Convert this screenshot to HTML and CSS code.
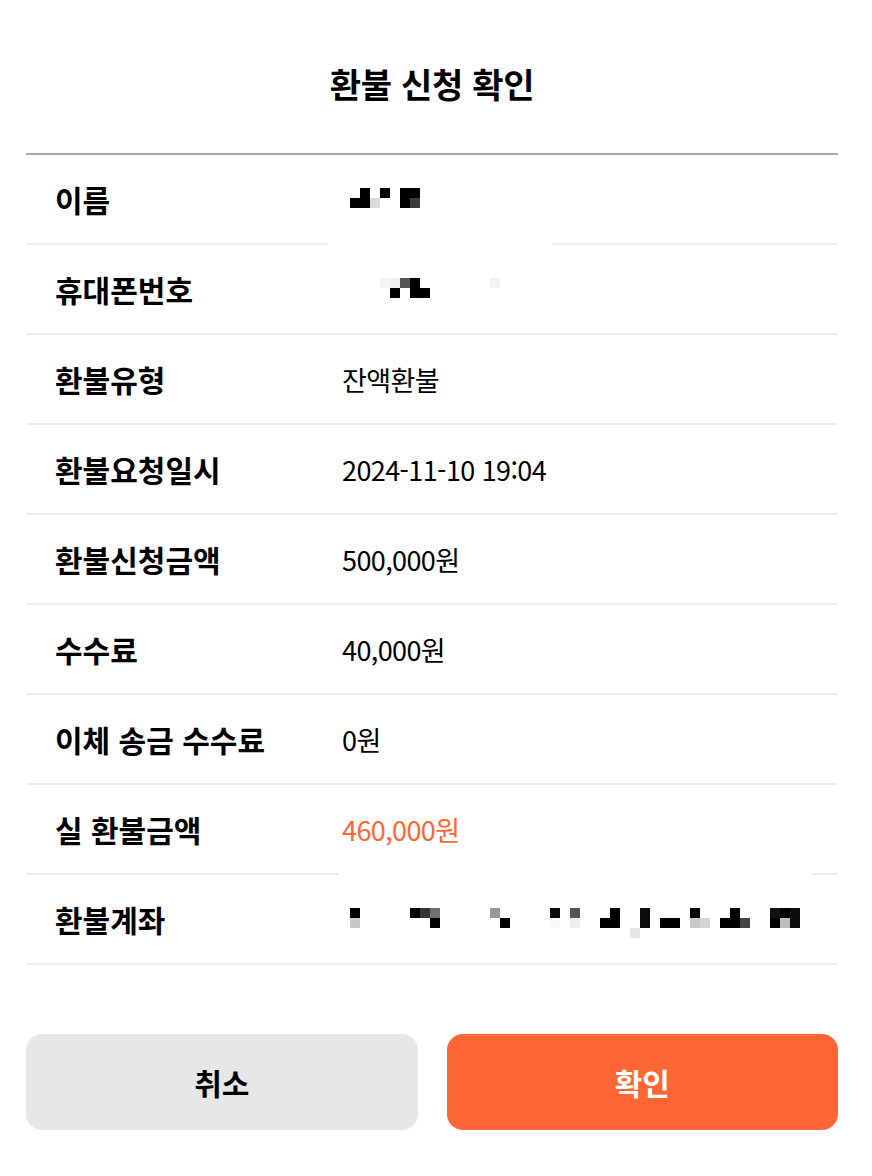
FILE: index.html
```html
<!DOCTYPE html>
<html lang="ko">
<head>
    <meta charset="UTF-8">
    <meta name="viewport" content="width=device-width, initial-scale=1.0">
    <title>환불 신청 확인</title>
    <link rel="stylesheet" href="styles.css">
</head>
<body>
    <div class="refund-confirm">
        <h1 class="title">환불 신청 확인</h1>

        <div class="info-list">
            <div class="info-row">
                <span class="label">이름</span>
                <span class="value"></span>
                <svg class="redact redact-name" width="225" height="90" viewBox="0 0 225 90" shape-rendering="crispEdges">
                    <rect width="225" height="90" fill="#fff"/>
                    <rect x="32" y="33" width="10" height="10" fill="#000"/>
                    <rect x="22" y="43" width="20" height="10" fill="#000"/>
                    <rect x="42" y="43" width="10" height="10" fill="#d9d9d9"/>
                    <rect x="52" y="33" width="10" height="10" fill="#000"/>
                    <rect x="72" y="33" width="20" height="10" fill="#000"/>
                    <rect x="72" y="43" width="10" height="10" fill="#000"/>
                    <rect x="82" y="43" width="10" height="10" fill="#3a3a3a"/>
                </svg>
            </div>
            <div class="info-row">
                <span class="label">휴대폰번호</span>
                <span class="value"></span>
                <svg class="redact redact-phone" width="120" height="90" viewBox="0 0 120 90" shape-rendering="crispEdges">
                    <rect x="0" y="33" width="10" height="10" fill="#f5f5f5"/>
                    <rect x="10" y="33" width="10" height="10" fill="#efefef"/>
                    <rect x="20" y="33" width="10" height="10" fill="#555"/>
                    <rect x="30" y="33" width="10" height="10" fill="#000"/>
                    <rect x="10" y="43" width="10" height="10" fill="#000"/>
                    <rect x="30" y="43" width="20" height="10" fill="#000"/>
                    <rect x="110" y="33" width="10" height="10" fill="#f2f2f2"/>
                </svg>
            </div>
            <div class="info-row">
                <span class="label">환불유형</span>
                <span class="value">잔액환불</span>
            </div>
            <div class="info-row">
                <span class="label">환불요청일시</span>
                <span class="value">2024-11-10 19:04</span>
            </div>
            <div class="info-row">
                <span class="label">환불신청금액</span>
                <span class="value">500,000원</span>
            </div>
            <div class="info-row">
                <span class="label">수수료</span>
                <span class="value">40,000원</span>
            </div>
            <div class="info-row">
                <span class="label">이체 송금 수수료</span>
                <span class="value">0원</span>
            </div>
            <div class="info-row">
                <span class="label">실 환불금액</span>
                <span class="value highlight">460,000원</span>
            </div>
            <div class="info-row">
                <span class="label">환불계좌</span>
                <span class="value"></span>
                <svg class="redact redact-account" width="474" height="70" viewBox="0 0 474 70" shape-rendering="crispEdges">
                    <rect width="474" height="70" fill="#fff"/>
                    <rect x="12" y="35" width="10" height="10" fill="#000"/>
                    <rect x="12" y="45" width="10" height="10" fill="#c8c8c8"/>
                    <rect x="72" y="35" width="10" height="10" fill="#000"/>
                    <rect x="82" y="35" width="10" height="10" fill="#333"/>
                    <rect x="92" y="35" width="10" height="10" fill="#707070"/>
                    <rect x="92" y="45" width="10" height="10" fill="#000"/>
                    <rect x="152" y="35" width="10" height="10" fill="#999"/>
                    <rect x="162" y="45" width="10" height="10" fill="#000"/>
                    <rect x="212" y="35" width="10" height="10" fill="#0a0a0a"/>
                    <rect x="212" y="45" width="10" height="10" fill="#fafafa"/>
                    <rect x="232" y="35" width="10" height="10" fill="#555"/>
                    <rect x="232" y="45" width="10" height="10" fill="#eee"/>
                    <rect x="262" y="45" width="10" height="10" fill="#000"/>
                    <rect x="272" y="35" width="10" height="20" fill="#000"/>
                    <rect x="292" y="55" width="10" height="10" fill="#e6e6e6"/>
                    <rect x="302" y="35" width="10" height="20" fill="#0d0d0d"/>
                    <rect x="322" y="45" width="20" height="10" fill="#000"/>
                    <rect x="352" y="35" width="10" height="10" fill="#000"/>
                    <rect x="352" y="45" width="10" height="10" fill="#c8c8c8"/>
                    <rect x="362" y="45" width="10" height="10" fill="#d4d4d4"/>
                    <rect x="382" y="45" width="10" height="10" fill="#000"/>
                    <rect x="392" y="35" width="10" height="20" fill="#000"/>
                    <rect x="402" y="45" width="10" height="10" fill="#444"/>
                    <rect x="432" y="35" width="10" height="10" fill="#111"/>
                    <rect x="432" y="45" width="10" height="10" fill="#000"/>
                    <rect x="442" y="35" width="10" height="10" fill="#000"/>
                    <rect x="442" y="45" width="10" height="10" fill="#bebebe"/>
                    <rect x="452" y="35" width="10" height="20" fill="#0d0d0d"/>
                </svg>
            </div>
        </div>

        <div class="actions">
            <button class="btn btn-cancel">취소</button>
            <button class="btn btn-confirm">확인</button>
        </div>
    </div>
</body>
</html>
```

FILE: styles.css
```css
body {
    margin: 0;
    background: #ffffff;
    font-family: "Noto Sans CJK KR", "Noto Sans", sans-serif;
    color: #000000;
}

.refund-confirm {
    padding: 0 34px 0 26px;
}

.title {
    margin: 0;
    padding: 58px 0 43px;
    font-size: 34px;
    line-height: 52px;
    font-weight: 700;
    letter-spacing: -0.3px;
    text-align: center;
    border-bottom: 2px solid #a6a6a6;
}

.info-row {
    position: relative;
    display: flex;
    align-items: center;
    height: 88px;
    border-bottom: 2px solid #ececec;
}

.label {
    width: 287px;
    padding-left: 29px;
    font-size: 30px;
    font-weight: 700;
    letter-spacing: 0;
}

.value {
    font-size: 27px;
    letter-spacing: -0.6px;
}

.value.highlight {
    color: #ff6633;
}

/* redaction mosaics laid over the row */
.redact {
    position: absolute;
}

.redact-name { left: 302px; top: 0; }
.redact-phone { left: 354px; top: 0; }
.redact-account { left: 312px; top: -2px; }

.actions {
    display: flex;
    gap: 29px;
    margin-top: 69px;
}

.btn {
    flex: 1;
    height: 96px;
    border: none;
    border-radius: 16px;
    font-family: inherit;
    font-size: 30px;
    font-weight: 700;
}

.btn-cancel {
    background: #e7e7e7;
    color: #000000;
}

.btn-confirm {
    background: #ff6633;
    color: #ffffff;
}
```
